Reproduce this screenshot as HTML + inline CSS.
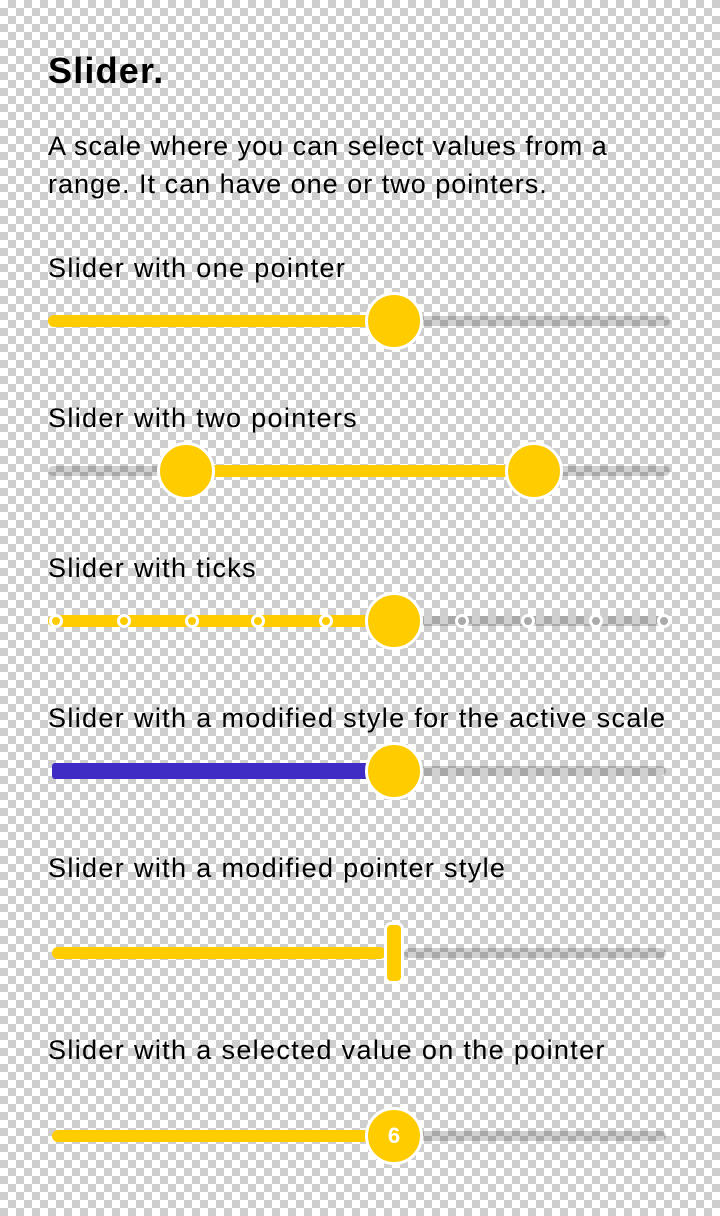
<!DOCTYPE html><html><head><style>
body{margin:0;width:720px;height:1216px;position:relative;overflow:hidden;
background-color:#fff;background-image:conic-gradient(#cecece 25%,#fff 0 50%,#cecece 0 75%,#fff 0);background-size:16px 16px;
font-family:"Liberation Sans",sans-serif;color:#000}
.t{position:absolute;left:48px;font-size:27px;white-space:nowrap;letter-spacing:1.35px}
.y{position:absolute;background:#ffcc00;height:12px;border-radius:6px}
.g{position:absolute;background:rgba(0,0,0,.18);height:10px;border-radius:5px}
.th{position:absolute;width:52px;height:52px;border-radius:50%;background:#ffcc00;border:3px solid #fff;box-sizing:content-box;color:#fff;font-weight:bold;font-size:22px;text-align:center;line-height:52px}
.tk{position:absolute;width:8px;height:8px;border-radius:50%;border:3px solid #fff;background:#ffcc00}
.tg{background:#aaa}
</style></head><body>
<div class="t" style="top:50px;font-size:36px;font-weight:bold;letter-spacing:1.2px">Slider.</div>
<div class="t" style="top:127px;line-height:38px;letter-spacing:1px">A scale where you can select values from a<br>range. It can have one or two pointers.</div>
<div class="t" style="top:253px">Slider with one pointer</div>
<div class="y" style="left:48px;width:330px;top:315px"></div>
<div class="g" style="left:420px;width:250px;top:316px"></div>
<div class="th" style="left:365px;top:292px"></div>

<div class="t" style="top:403px">Slider with two pointers</div>
<div class="g" style="left:48px;width:120px;top:466px"></div>
<div class="y" style="left:200px;width:320px;top:465px"></div>
<div class="g" style="left:550px;width:120px;top:466px"></div>
<div class="th" style="left:157px;top:442px"></div>
<div class="th" style="left:505px;top:442px"></div>

<div class="t" style="top:553px">Slider with ticks</div>
<div class="y" style="left:48px;width:330px;top:615px"></div>
<div class="g" style="left:420px;width:250px;top:616px"></div>
<div class="tk" style="left:49px;top:614px"></div>
<div class="tk" style="left:117px;top:614px"></div>
<div class="tk" style="left:185px;top:614px"></div>
<div class="tk" style="left:251px;top:614px"></div>
<div class="tk" style="left:319px;top:614px"></div>
<div class="tk tg" style="left:455px;top:614px"></div>
<div class="tk tg" style="left:521px;top:614px"></div>
<div class="tk tg" style="left:589px;top:614px"></div>
<div class="tk tg" style="left:657px;top:614px"></div>
<div class="th" style="left:365px;top:592px"></div>

<div class="t" style="top:703px">Slider with a modified style for the active scale</div>
<div style="position:absolute;left:52px;width:326px;top:763px;height:16px;border-radius:3px;background:#3f2cc4"></div>
<div class="g" style="left:420px;width:246px;top:766px"></div>
<div class="th" style="left:365px;top:742px"></div>

<div class="t" style="top:853px">Slider with a modified pointer style</div>
<div class="y" style="left:52px;width:334px;top:947px"></div>
<div class="g" style="left:404px;width:262px;top:948px"></div>
<div style="position:absolute;left:384px;top:922px;width:14px;height:56px;border-radius:7px;background:#ffcc00;border:3px solid #fff"></div>

<div class="t" style="top:1035px">Slider with a selected value on the pointer</div>
<div class="y" style="left:52px;width:326px;top:1130px"></div>
<div class="g" style="left:420px;width:246px;top:1131px"></div>
<div class="th" style="left:365px;top:1107px">6</div>
</body></html>
